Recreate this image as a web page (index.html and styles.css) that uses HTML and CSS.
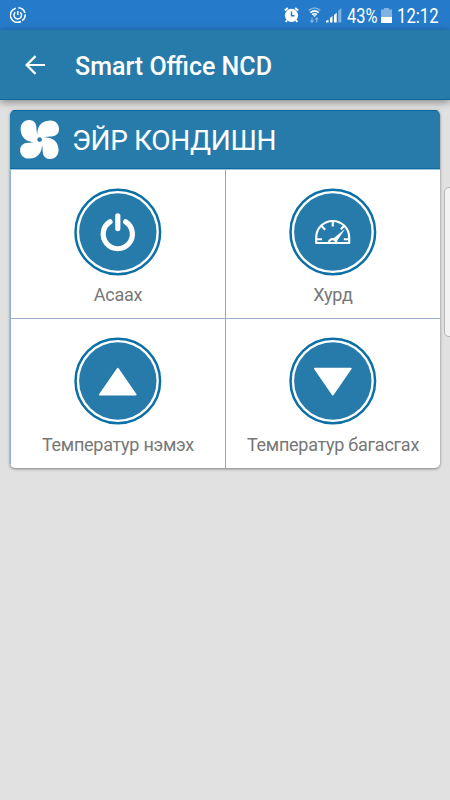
FILE: index.html
```html
<!DOCTYPE html>
<html lang="mn">
<head>
<meta charset="utf-8">
<title>Smart Office NCD</title>
<link rel="stylesheet" href="styles.css">
</head>
<body>
<div class="screen">
  <div class="status">
    <svg class="sync" width="16" height="16" viewBox="0 0 16 16" fill="none" stroke="#fff">
      <path d="M5.800 1.200A7.200 7.200 0 1 0 11 14.500M8.300 .800A7.200 7.200 0 0 1 14.900 6M15.200 7.500A7.200 7.200 0 0 1 12.200 13.700" stroke-width="1.600"/>
      <path d="M5.300 5.200A3.800 3.800 0 1 0 10.200 5.200M7.800 4v4" stroke-width="1.500"/>
    </svg>
    <svg class="alarm" width="15" height="16" viewBox="0 0 15 16">
      <circle cx="7.5" cy="8.3" r="6.6" fill="#fff"/>
      <path d="M.8 3.500 3.800 1M14.200 3.500 11.200 1M3 13l-1.200 2M12 13l1.200 2" stroke="#fff" stroke-width="1.9"/>
      <path d="M7.500 4.500v4.200h3" fill="none" stroke="#257bc9" stroke-width="1.4"/>
    </svg>
    <svg class="wifi" width="13" height="16" viewBox="0 0 13 16" fill="none">
      <path d="M.7 3.300Q6.500-1.400 12.300 3.300" stroke="#82b3e0" stroke-width="1.5"/>
      <path d="M2.300 5.700Q6.500 2.200 10.700 5.700M4.100 7.700Q6.500 5.800 8.900 7.700" stroke="#fff" stroke-width="1.6"/>
      <path d="M4.800 8.300h3.400L6.500 10z" fill="#fff"/>
      <path d="M4 10.500v4.600M2.400 13.500 4 15.100l1.600-1.600M8.700 15.400v-4.600M7.100 12.400l1.600-1.600 1.600 1.600" stroke="#82b3e0" stroke-width="1.2"/>
    </svg>
    <svg class="signal" width="16" height="16" viewBox="0 0 16 16">
      <path d="M0 15.500v-1.500L2.500 12.500v3zM4 15.500v-4.500L6.500 9V15.500zM8 15.500V8l2.700-2.200V15.500z" fill="#fff"/>
      <path d="M12.200 15.500V3.800L15.300 1v14.500z" fill="#82b3e0"/>
    </svg>
    <span class="pct">43%</span>
    <svg class="battery" width="11" height="15" viewBox="0 0 11 15">
      <path d="M3 0h5v1.500h3V9H0V1.500h3z" fill="#82b3e0"/>
      <path d="M0 9h11v6H0z" fill="#fff"/>
    </svg>
    <span class="clock">12:12</span>
  </div>
  <header class="appbar">
    <svg class="back" width="22" height="20" viewBox="0 0 22 20" fill="none" stroke="#fff" stroke-width="2.2">
      <path d="M21 10H2.500M11.500 1.100 2.600 10l8.900 8.900"/>
    </svg>
    <h1 class="title">Smart Office NCD</h1>
  </header>
  <main class="card">
    <div class="card-head">
      <svg class="fan" width="40" height="40" viewBox="0 0 40 40">
        <defs>
          <path id="blade" d="M19.600 19.600 17.300 17.500C16.500 8 20 1 30 .600C41 .500 42 15 33 16.300C28 16.800 24 16.500 22.300 19z" fill="#fff"/>
        </defs>
        <use href="#blade"/>
        <use href="#blade" transform="rotate(90 19.600 19.600)"/>
        <use href="#blade" transform="rotate(180 19.600 19.600)"/>
        <use href="#blade" transform="rotate(270 19.600 19.600)"/>
        <circle cx="19.600" cy="19.600" r="4.600" fill="#fff"/>
        <circle cx="19.600" cy="19.600" r="2.300" fill="#277baa"/>
      </svg>
      <h2 class="card-title">ЭЙР КОНДИШН</h2>
    </div>
    <div class="grid">
      <div class="cell">
        <svg class="knob" width="88" height="88" viewBox="0 0 88 88">
          <circle class="ring" cx="43.800" cy="44" r="42.300"/><circle class="disc" cx="43.800" cy="44" r="38.700"/>
          <path d="M43.800 27.800v12.800M36 33.800A14.600 14.600 0 1 0 51.600 33.800" fill="none" stroke="#fff" stroke-width="5.200" stroke-linecap="round"/>
        </svg>
        <span class="label power">Асаах</span>
      </div>
      <div class="cell">
        <svg class="knob" width="88" height="88" viewBox="0 0 88 88">
          <circle class="ring" cx="43.800" cy="44" r="42.300"/><circle class="disc" cx="43.800" cy="44" r="38.700"/>
          <g fill="none" stroke="#fff" stroke-width="2.100">
            <path d="M27.200 55V49.500A16.500 16.500 0 0 1 60.200 49.500V55z" stroke-linejoin="round"/>
            <path d="M43.800 33v5.500M32.500 38l3.700 3.700M55 38l-3.200 3.200M28 51.200h5M54.800 51.200h5"/>
            <path d="M39.800 55a3.800 3.800 0 0 1 7.600 0" stroke-width="2.300"/>
            <path d="M44.200 50.500 56 41l-8 12z" fill="#fff" stroke="none"/>
          </g>
        </svg>
        <span class="label speed">Хурд</span>
      </div>
      <div class="cell">
        <svg class="knob" width="88" height="88" viewBox="0 0 88 88">
          <circle class="ring" cx="43.800" cy="44" r="42.300"/><circle class="disc" cx="43.800" cy="44" r="38.700"/>
          <path d="M43.800 31.500 61.900 57.700H25.700z" fill="#fff" stroke="#fff" stroke-width="1.500" stroke-linejoin="round"/>
        </svg>
        <span class="label up">Температур нэмэх</span>
      </div>
      <div class="cell">
        <svg class="knob" width="88" height="88" viewBox="0 0 88 88">
          <circle class="ring" cx="43.800" cy="44" r="42.300"/><circle class="disc" cx="43.800" cy="44" r="38.700"/>
          <path d="M43.800 57.700 25.700 31.500H61.900z" fill="#fff" stroke="#fff" stroke-width="1.500" stroke-linejoin="round"/>
        </svg>
        <span class="label down">Температур багасгах</span>
      </div>
    </div>
  </main>
  <div class="edge-handle"></div>
</div>
</body>
</html>
```

FILE: styles.css
```css
* { box-sizing: border-box; }
body { margin: 0; font-family: Roboto, "Liberation Sans", sans-serif; }
h1, h2 { margin: 0; }
svg { display: block; flex: none; }
.screen { position: relative; height: 800px; overflow: hidden; background: #e1e1e1; }
.status { display: flex; align-items: center; height: 30px; padding-left: 10px; background: #257bc9; color: #fff; font-size: 20px; line-height: 30px; white-space: nowrap; }
.alarm { margin-left: 258px; }
.wifi { margin-left: 9px; }
.signal { margin-left: 5px; }
.pct, .clock { padding-top: 2px; transform: scaleX(.82); transform-origin: left; }
.pct { width: 30px; margin-left: 5px; }
.battery { margin-left: 4px; }
.clock { margin-left: 5px; transform: scaleX(.835); }
.appbar { position: relative; display: flex; align-items: center; height: 70px; padding-left: 24px; background: #277baa; color: #fff; border-bottom: 1px solid #0b6a9f; box-shadow: 0 2px 8px rgba(0, 0, 0, .42); }
.title { margin-left: 29px; padding-top: 4px; font-size: 25px; font-weight: 500; line-height: 30px; white-space: nowrap; }
.card { width: 430px; height: 358px; margin: 10px 0 0 10px; overflow: hidden; background: #fff; border-radius: 5px; box-shadow: 0 1px 3px rgba(0, 0, 0, .45); }
.card-head { display: flex; align-items: center; height: 59px; padding: 1px 0 0 10px; background: #277baa; color: #fff; border-top: 1px solid #0b6a9f; border-bottom: 1px solid #0b6a9f; }
.card-title { margin-left: 12px; padding-top: 2px; font-size: 28px; font-weight: 400; line-height: 36px; letter-spacing: -.35px; white-space: nowrap; }
.grid { display: grid; grid-template-columns: 216px 214px; grid-template-rows: 150px 149px; border-top: 1px solid #9fc4da; }
.cell { display: flex; flex-direction: column; align-items: center; padding-top: 18px; border-bottom: 1px solid #9aafc9; }
.cell:nth-child(odd) { border-left: 1px solid #8eb1cd; border-right: 1px solid #8eaac4; }
.grid { grid-template-rows: 149px 149px; }
.cell:nth-child(n+3) { border-bottom: 0; }
.label { margin-top: 8px; color: #777; font-size: 18px; line-height: 21px; letter-spacing: -.26px; white-space: nowrap; }
.cell:nth-child(n+3) .label { margin-top: 9px; }
.ring { fill: #fff; stroke: #0b70a5; stroke-width: 2.5; }
.disc { fill: #277baa; }
.edge-handle { position: absolute; top: 187px; right: -6px; width: 12px; height: 150px; background: #f3f3f3; border: 1px solid #b5b5b5; border-radius: 5px; }
```
